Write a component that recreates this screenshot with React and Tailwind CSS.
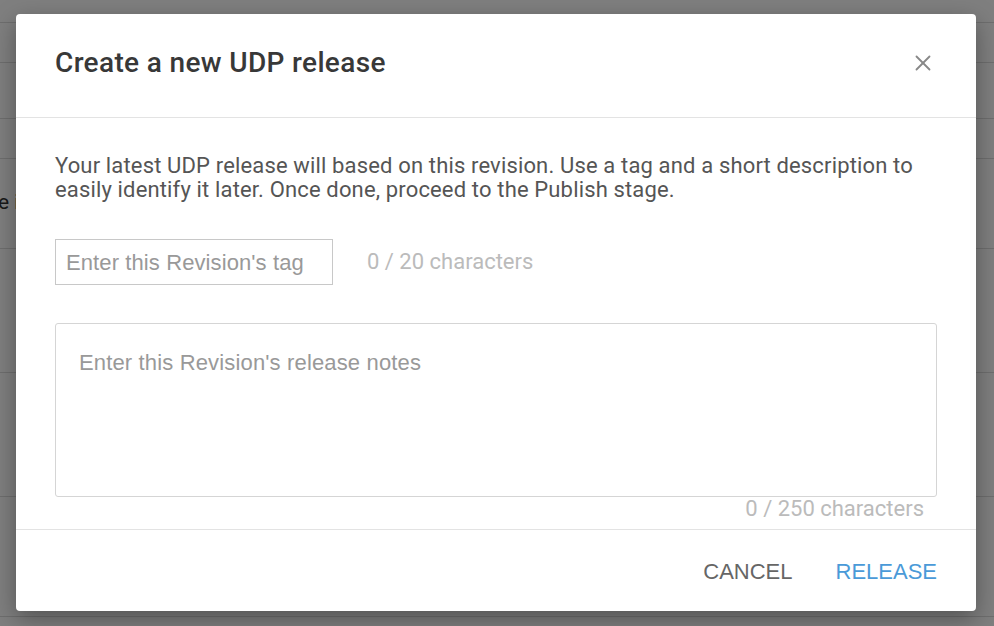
import { X } from 'lucide-react';

const rows = [23, 63, 119, 159, 249, 373, 497, 617];

function Backdrop() {
  // the page behind the modal: a list with thin row lines
  return (
    <div className="absolute inset-0 bg-white">
      <div className="flex flex-col">
        {rows.map((y, i) => (
          <div
            key={y}
            className="border-b border-[#dcdcdc] flex items-end"
            style={{ height: i === 0 ? y : y - rows[i - 1] }}
          >
            {y === 249 && (
              <span className="mb-[30px] -ml-[2px] text-[21px] text-[#333] font-['Roboto',sans-serif]">e i</span>
            )}
          </div>
        ))}
      </div>
    </div>
  );
}

export default function App() {
  return (
    <div className="relative h-[626px] w-full overflow-hidden font-['Roboto',sans-serif]">
      <Backdrop />
      <div className="absolute inset-0 bg-black/50" />

      <div className="absolute left-[16px] top-[14px] w-[960px] h-[597px] bg-white rounded-[4px] shadow-[0_8px_24px_rgba(0,0,0,0.35)] flex flex-col">
        {/* Header */}
        <div className="h-[104px] flex items-center justify-between pl-[39px] pr-[40px] pb-[5px] border-b border-[#e3e3e3]">
          <h2 className="text-[28px] tracking-[0.35px] font-medium text-[#383838]">Create a new UDP release</h2>
          <button className="text-[#888]">
            <X className="w-[26px] h-[26px]" strokeWidth={1.7} />
          </button>
        </div>

        {/* Body */}
        <div className="flex-1 px-[39px] pt-[36px]">
          <p className="text-[22px] tracking-[0.15px] leading-[24px] text-[#555] pr-[20px]">
            Your latest UDP release will based on this revision. Use a tag and a short description to easily identify it later. Once done, proceed to the Publish stage.
          </p>

          <div className="mt-[37px] flex items-center">
            <div className="w-[278px] h-[46px] border border-[#c8c8c8] flex items-center px-[10px]">
              <span className="text-[22px] tracking-[0.1px] text-[#999] font-['Liberation_Sans',Arial,sans-serif]">Enter this Revision's tag</span>
            </div>
            <span className="ml-[34px] -mt-[2px] text-[22px] text-[#bbb]">0 / 20 characters</span>
          </div>

          <div className="mt-[38px] h-[174px] border-[1.5px] border-[#d5d5d5] rounded-[3px] px-[23px] pt-[22px]">
            <span className="text-[22px] tracking-[0.15px] text-[#999] font-['Liberation_Sans',Arial,sans-serif]">Enter this Revision's release notes</span>
          </div>
          <div className="text-right pr-[13px] text-[22px] leading-[24px] text-[#bbb]">0 / 250 characters</div>
        </div>

        {/* Footer */}
        <div className="h-[82px] border-t border-[#e3e3e3] flex items-center justify-end gap-[43px] pr-[39px] pt-[2px] font-['Liberation_Sans',Arial,sans-serif] text-[22px]">
          <button className="text-[#666]">CANCEL</button>
          <button className="text-[#4a9ad8]">RELEASE</button>
        </div>
      </div>
    </div>
  );
}
